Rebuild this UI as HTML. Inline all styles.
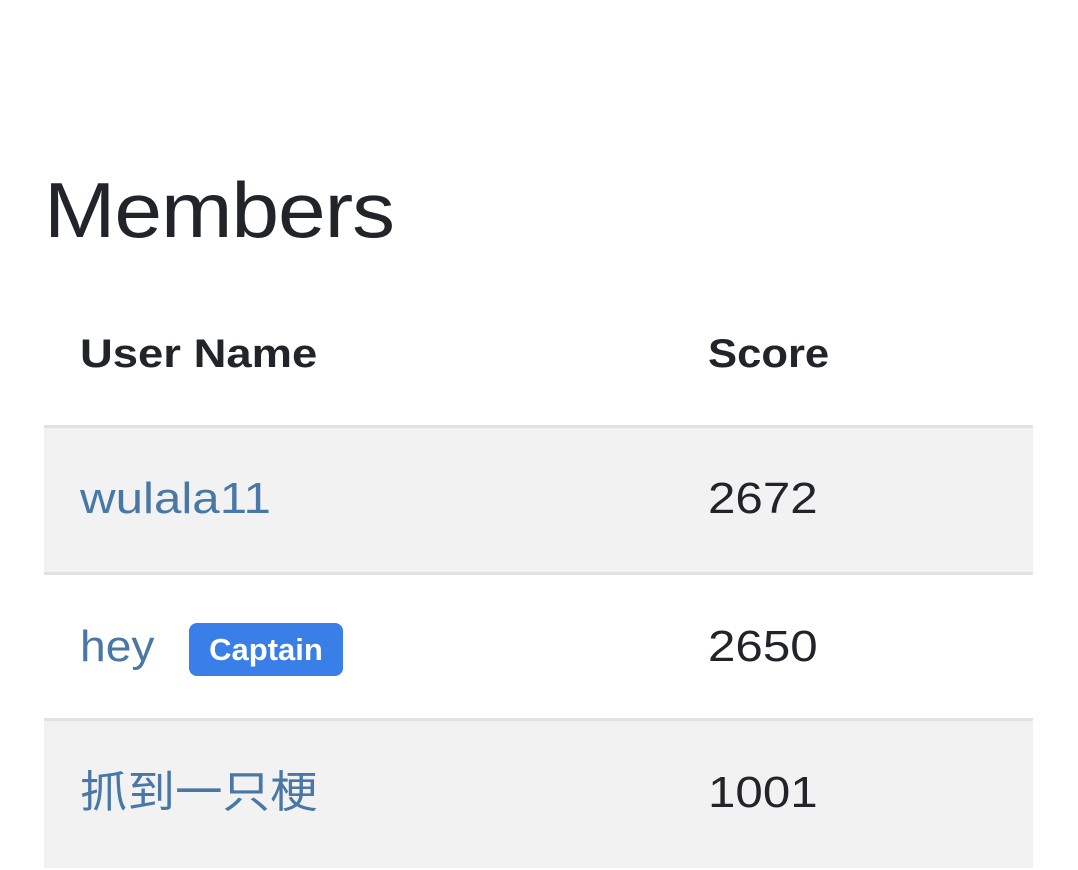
<!DOCTYPE html>
<html><head><meta charset="utf-8"><style>
html,body{margin:0;padding:0;background:#fff;width:1078px;height:870px;overflow:hidden;font-family:"Liberation Sans","Noto Sans CJK SC",sans-serif;color:#212529}
.a{position:absolute;white-space:nowrap;transform-origin:left center}
h1{position:absolute;left:44px;top:165px;margin:0;font-size:78px;font-weight:400;line-height:90px;letter-spacing:-1px;transform:scaleX(1.1);transform-origin:left center}
.th{font-weight:bold;font-size:40px;top:330px;line-height:48px}
.row{position:absolute;left:44px;width:989px;height:144px;border-top:3px solid #dee2e6}
.g{background:#f2f2f2}
.n{font-size:44px;color:#4a78a6;line-height:50px;transform:scaleX(1.12)}
.s{font-size:44px;line-height:50px;transform:scaleX(1.12)}
.badge{position:absolute;left:189px;top:623px;width:154px;height:53px;background:#3a7fe8;border-radius:8px;color:#fff;font-weight:bold;font-size:31px;line-height:53px;text-align:center}
</style></head><body>
<h1>Members</h1>
<div class="a th" style="left:80px;transform:scaleX(1.135)">User Name</div>
<div class="a th" style="left:708px;transform:scaleX(1.09)">Score</div>
<div class="row g" style="top:425px"></div>
<div class="row" style="top:572px"></div>
<div class="row g" style="top:718px;height:147px"></div>
<div class="a n" style="left:80px;top:474px">wulala11</div>
<div class="a s" style="left:708px;top:474px">2672</div>
<div class="a n" style="left:80px;top:622px;transform:scaleX(1.05)">hey</div>
<div class="badge">Captain</div>
<div class="a s" style="left:708px;top:622px">2650</div>
<div class="a n" style="left:80px;top:768px;transform:scaleX(1.08)">抓到一只梗</div>
<div class="a s" style="left:708px;top:768px">1001</div>
</body></html>
